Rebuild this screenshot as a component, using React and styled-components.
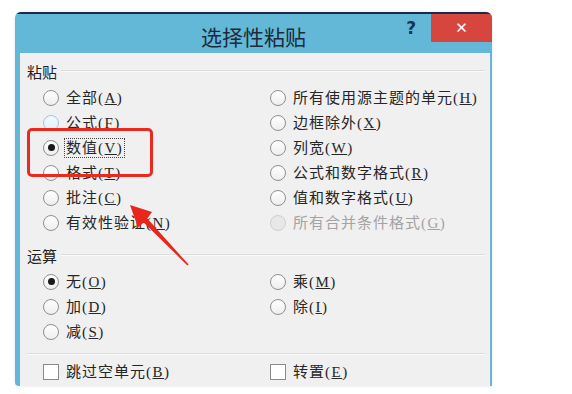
import React from 'react'
import styled, { createGlobalStyle } from 'styled-components'

const GlobalStyle = createGlobalStyle`
  html, body {
    margin: 0;
    background: #ffffff;
  }
  body {
    font-family: "Liberation Serif", "Noto Sans CJK SC", serif;
    color: #222;
  }
`

const pasteLeft = [
  { text: '全部', hotkey: 'A' },
  { text: '公式', hotkey: 'F', hover: true },
  { text: '数值', hotkey: 'V', checked: true, focus: true },
  { text: '格式', hotkey: 'T' },
  { text: '批注', hotkey: 'C' },
  { text: '有效性验证', hotkey: 'N' },
]

const pasteRight = [
  { text: '所有使用源主题的单元', hotkey: 'H' },
  { text: '边框除外', hotkey: 'X' },
  { text: '列宽', hotkey: 'W' },
  { text: '公式和数字格式', hotkey: 'R' },
  { text: '值和数字格式', hotkey: 'U' },
  { text: '所有合并条件格式', hotkey: 'G', disabled: true },
]

const opLeft = [
  { text: '无', hotkey: 'O', checked: true },
  { text: '加', hotkey: 'D' },
  { text: '减', hotkey: 'S' },
]

const opRight = [
  { text: '乘', hotkey: 'M' },
  { text: '除', hotkey: 'I' },
]

export default function App() {
  return (
    <Page>
      <GlobalStyle />
      <Dialog>
        <TitleBar>
          <span />
          <Title>选择性粘贴</Title>
          <Controls>
            <Help>?</Help>
            <CloseButton>✕</CloseButton>
          </Controls>
        </TitleBar>
        <Body>
          <GroupLabel>粘贴</GroupLabel>
          <Options>
            <Column>
              {pasteLeft.map(o => (
                <RadioOption key={o.hotkey} {...o} />
              ))}
            </Column>
            <Column>
              {pasteRight.map(o => (
                <RadioOption key={o.hotkey} {...o} />
              ))}
            </Column>
          </Options>

          <GroupLabel spaced>运算</GroupLabel>
          <Options>
            <Column>
              {opLeft.map(o => (
                <RadioOption key={o.hotkey} {...o} />
              ))}
            </Column>
            <Column>
              {opRight.map(o => (
                <RadioOption key={o.hotkey} {...o} />
              ))}
            </Column>
          </Options>

          <Divider />
          <Options>
            <Option>
              <CheckBox />
              <Label text="跳过空单元" hotkey="B" />
            </Option>
            <Option>
              <CheckBox />
              <Label text="转置" hotkey="E" />
            </Option>
          </Options>
        </Body>
      </Dialog>

      <Highlight />
      <Arrow width="80" height="80" viewBox="120 195 80 80">
        <polygon
          points="130,205 152,212 147.3,218.6 188.6,264.6 187.4,265.4 143.7,222.4 138,227.5"
          fill="#e8261c"
        />
      </Arrow>
    </Page>
  )
}

const Label = ({ text, hotkey, focus, disabled }) => (
  <LabelText focus={focus} disabled={disabled}>
    {text}
    <Key>
      (<u>{hotkey}</u>)
    </Key>
  </LabelText>
)

const RadioOption = ({ text, hotkey, checked, hover, focus, disabled }) => (
  <Option>
    <Radio checked={checked} hover={hover} disabled={disabled} />
    <Label text={text} hotkey={hotkey} focus={focus} disabled={disabled} />
  </Option>
)

const Page = styled.div`
  position: relative;
  width: 572px;
  height: 394px;
  padding: 12px 0 0 15px;
  box-sizing: border-box;
  overflow: hidden;
`

const Dialog = styled.div`
  width: 477px;
  height: 374px;
  display: flex;
  flex-direction: column;
  border-radius: 6px 6px 0 4px;
  overflow: hidden;
  box-shadow: 0 0 3px rgba(0, 0, 0, 0.12);
`

const TitleBar = styled.div`
  height: 41px;
  box-sizing: border-box;
  border-top: 2px solid #1b2a4a;
  background: #62b8d6;
  display: grid;
  grid-template-columns: 1fr auto 1fr;
  align-items: start;
`

const Title = styled.div`
  font-family: "Noto Sans CJK SC", sans-serif;
  font-size: 21px;
  color: #1e2a3a;
  line-height: 21px;
  padding-top: 12px;
`

const Controls = styled.div`
  display: flex;
  justify-content: flex-end;
  align-items: flex-start;
`

const Help = styled.div`
  font-family: "DejaVu Sans", sans-serif;
  font-weight: bold;
  font-size: 17px;
  line-height: 18px;
  color: #1c3350;
  padding-top: 5px;
  margin-right: 15px;
`

const CloseButton = styled.div`
  width: 61px;
  height: 28px;
  background: #d6463f;
  color: #fff;
  font-family: "DejaVu Sans", sans-serif;
  font-size: 15px;
  font-weight: bold;
  display: flex;
  align-items: center;
  justify-content: center;
`

const Body = styled.div`
  flex: 1;
  background: #f0f0f0;
  border-left: 5px solid #62b8d6;
  border-right: 2px solid #62b8d6;
  padding: 8px 5px 0 7px;
`

const GroupLabel = styled.div`
  display: flex;
  align-items: center;
  gap: 4px;
  height: 20px;
  font-family: "Noto Sans CJK SC", sans-serif;
  font-size: 15px;
  color: #222;
  margin-top: ${props => (props.spaced ? '10px' : '0')};

  &::after {
    content: '';
    flex: 1;
    height: 1px;
    background: #dcdcdc;
    border-bottom: 1px solid #fafafa;
  }
`

const Options = styled.div`
  display: grid;
  grid-template-columns: 227px 1fr;
  padding-left: 16px;
  margin-top: 4px;
`

const Column = styled.div`
  display: flex;
  flex-direction: column;
`

const Option = styled.div`
  display: flex;
  align-items: center;
  height: 25px;
  gap: 6px;
`

const Radio = styled.span`
  width: 16px;
  height: 16px;
  box-sizing: border-box;
  border-radius: 50%;
  border: 1px solid ${props => (props.disabled ? '#cfcfcf' : props.hover ? '#9cc8e6' : '#8f8f8f')};
  background: ${props =>
    props.disabled
      ? '#e8e8e8'
      : props.hover
      ? 'linear-gradient(#f4faff, #e2f0fa)'
      : 'linear-gradient(#ffffff, #eeeeee)'};
  display: flex;
  align-items: center;
  justify-content: center;
  flex-shrink: 0;

  &::after {
    content: '';
    display: ${props => (props.checked ? 'block' : 'none')};
    width: 7px;
    height: 7px;
    border-radius: 50%;
    background: #1a1a1a;
  }
`

const CheckBox = styled.span`
  width: 16px;
  height: 16px;
  box-sizing: border-box;
  border: 1px solid #8a8a8a;
  background: #fff;
  flex-shrink: 0;
`

const LabelText = styled.span`
  font-family: "Liberation Serif", "Noto Sans CJK SC", serif;
  font-size: 15px;
  letter-spacing: 1px;
  line-height: 18px;
  color: ${props => (props.disabled ? '#a3a3a3' : '#262626')};
  padding: 0 1px;
  outline: ${props => (props.focus ? '1px dotted #444' : 'none')};
  white-space: nowrap;
`

const Key = styled.span`
  letter-spacing: 1.5px;
`

const Divider = styled.div`
  height: 1px;
  background: #dcdcdc;
  border-bottom: 1px solid #fafafa;
  margin: 9px 0 4px;
`

const Highlight = styled.div`
  position: absolute;
  left: 27px;
  top: 128px;
  width: 126px;
  height: 49px;
  box-sizing: border-box;
  border: 3px solid #ea2a20;
  border-radius: 5px;
`

const Arrow = styled.svg`
  position: absolute;
  left: 120px;
  top: 195px;
`
